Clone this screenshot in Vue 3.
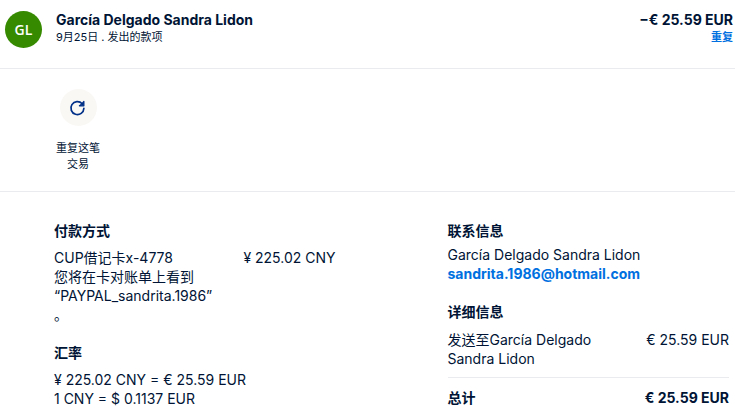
<script setup>
const person = 'García Delgado Sandra Lidon'
const email = 'sandrita.1986@hotmail.com'
</script>

<template>
  <main class="transaction">
    <header class="summary">
      <span class="avatar" aria-hidden="true">GL</span>
      <div class="identity">
        <h1>{{ person }}</h1>
        <p class="small">9月25日 . 发出的款项</p>
      </div>
      <div class="amount">
        <strong>−€ 25.59 EUR</strong>
        <a class="small link" href="#repeat">重复</a>
      </div>
    </header>

    <section class="actions">
      <button id="repeat" type="button" class="repeat">
        <span class="repeat-icon">
          <svg viewBox="0 0 18 18" width="18" height="18" aria-hidden="true">
            <path d="M13.2 4.7A6.5 6.5 0 1 0 14.9 9.3" fill="none" stroke="currentColor" stroke-width="1.7" stroke-linecap="round" />
            <path d="M14.9 2.4V6.8H10.4L12.8 4.9Z" fill="currentColor" stroke="currentColor" stroke-width="1.2" stroke-linejoin="round" />
          </svg>
        </span>
        <span class="repeat-label">重复这笔交易</span>
      </button>
    </section>

    <div class="details">
      <div class="column">
        <section>
          <h2>付款方式</h2>
          <div class="row">
            <p class="funding">CUP借记卡x-4778<br />您将在卡对账单上看到<br />“PAYPAL_sandrita.1986”<br />。</p>
            <p class="value">¥ 225.02 CNY</p>
          </div>
        </section>
        <section class="rate">
          <h2>汇率</h2>
          <p>¥ 225.02 CNY = € 25.59 EUR</p>
          <p>1 CNY = $ 0.1137 EUR</p>
        </section>
      </div>

      <div class="column">
        <section class="contact">
          <h2>联系信息</h2>
          <p>{{ person }}</p>
          <a class="link" :href="`mailto:${email}`">{{ email }}</a>
        </section>
        <section class="breakdown">
          <h2>详细信息</h2>
          <div class="row">
            <p class="recipient">发送至{{ person }}</p>
            <p class="value">€ 25.59 EUR</p>
          </div>
          <div class="row total">
            <p>总计</p>
            <p class="value">€ 25.59 EUR</p>
          </div>
        </section>
      </div>
    </div>
  </main>
</template>

<style>
body {
  background: #fff;
}
</style>

<style scoped>
.transaction {
  color: #001435;
  font: 14px/19px Inter, "Noto Sans CJK SC", sans-serif;
}
h1, h2, p {
  margin: 0;
}
h1, .amount strong {
  font-size: 14px;
  line-height: 18px;
  font-weight: 700;
}
h2 {
  margin-bottom: 7px;
  font-size: 14px;
  line-height: 20px;
  font-weight: 700;
}
.small {
  font-size: 11px;
  line-height: 16px;
}
.link {
  color: #0070e0;
  font-weight: 700;
  text-decoration: none;
}
.summary {
  display: flex;
  align-items: flex-start;
  padding: 11px 2px 20px 5px;
  border-bottom: 1px solid #eaebee;
}
.avatar {
  display: grid;
  place-items: center;
  width: 37px;
  height: 37px;
  margin-right: 14px;
  border-radius: 50%;
  background: #368a00;
  color: #fff;
  font: 600 14px "Open Sans", sans-serif;
}
.identity {
  flex: 1;
}
.amount {
  display: flex;
  flex-direction: column;
  align-items: flex-end;
}
.actions {
  padding: 20px 49px 19px;
  border-bottom: 1px solid #eaebee;
}
.repeat {
  display: flex;
  flex-direction: column;
  align-items: center;
  gap: 14px;
  width: 58px;
  padding: 0;
  border: 0;
  background: none;
  color: inherit;
  font: 11px/16px Inter, "Noto Sans CJK SC", sans-serif;
}
.repeat-icon {
  display: grid;
  place-items: center;
  width: 37px;
  height: 37px;
  border-radius: 50%;
  background: #faf8f5;
  color: #003087;
}
.repeat-label {
  width: 44px;
}
.details {
  display: grid;
  grid-template-columns: 1fr 1fr;
  gap: 112px;
  padding: 29px 6px 9px 54px;
}
.row {
  display: flex;
  justify-content: space-between;
}
.value {
  white-space: nowrap;
}
.rate, .breakdown {
  margin-top: 19px;
}
.contact h2 {
  margin-bottom: 4px;
}
.contact .link {
  display: block;
}
.breakdown h2 {
  margin-bottom: 8px;
}
.recipient {
  width: 160px;
}
.total {
  margin-top: 9px;
  padding-top: 10px;
  border-top: 1px solid #eaebee;
  font-weight: 700;
}
</style>
